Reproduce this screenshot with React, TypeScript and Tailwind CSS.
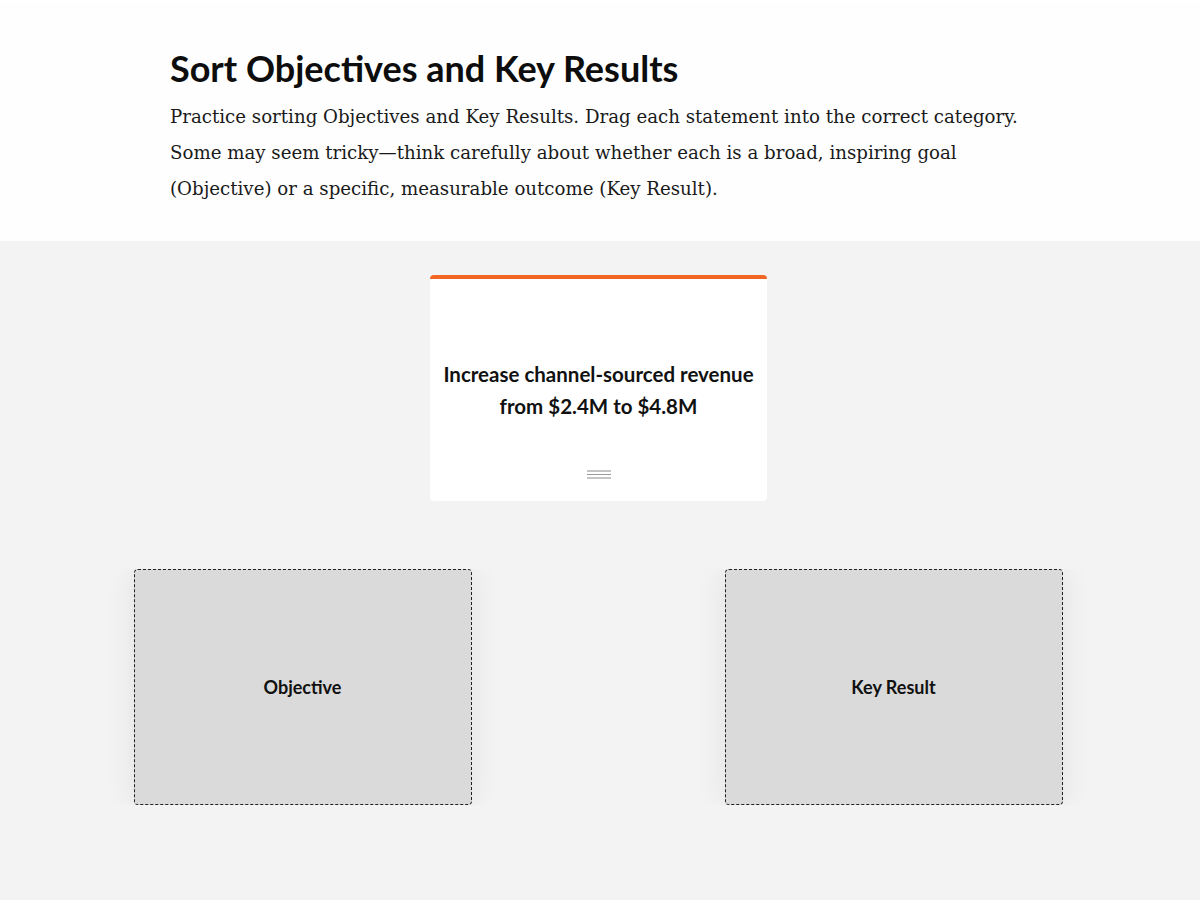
import React from "react";

const lato = { fontFamily: "Lato, 'Open Sans', sans-serif" };

function GripIcon() {
  return (
    <svg width="26" height="9" viewBox="0 0 26 9" aria-hidden>
      <line x1="1" y1="1" x2="25" y2="1" stroke="#8a8a8a" strokeWidth="1" />
      <line x1="1" y1="4.5" x2="25" y2="4.5" stroke="#9a9a9a" strokeWidth="1" />
      <line x1="1" y1="8" x2="25" y2="8" stroke="#8a8a8a" strokeWidth="1" />
    </svg>
  );
}

function DropZone({ label }: { label: string }) {
  return (
    <div className="flex h-[236px] w-[338px] items-center justify-center rounded-[4px] border border-dashed border-[#222] bg-[#dadada] shadow-[0_0_32px_rgba(0,0,0,0.07)]">
      <span style={lato} className="text-[18px] font-bold text-[#111]">
        {label}
      </span>
    </div>
  );
}

export default function App() {
  return (
    <div className="min-h-[900px] bg-[#f3f3f3]">
      {/* — Intro — */}
      <div className="mt-[3px] bg-[#fefefe] pt-[41px] pb-[34px]">
        <div className="mx-auto w-[860px]">
          <h1 style={lato} className="text-[36px] leading-[48px] font-bold text-[#0d0d0d]">
            Sort Objectives and Key Results
          </h1>
          <p
            style={{ fontFamily: "'DejaVu Serif', 'Liberation Serif', serif" }}
            className="mt-[7px] text-[18.2px] leading-[36px] text-[#1a1a1a]"
          >
            Practice sorting Objectives and Key Results. Drag each statement into the correct category.
            Some may seem tricky—think carefully about whether each is a broad, inspiring goal
            (Objective) or a specific, measurable outcome (Key Result).
          </p>
        </div>
      </div>

      {/* — Statement card — */}
      <div className="flex justify-center pt-[34px] pr-[3px]">
        <div className="flex h-[226px] w-[337px] flex-col items-center rounded-[4px] border-t-[4px] border-[#f26522] bg-white">
          <p
            style={lato}
            className="mt-[79px] px-2 text-center text-[20.5px] leading-[32px] font-bold text-[#111]"
          >
            Increase channel-sourced revenue
            <br />
            from $2.4M to $4.8M
          </p>
          <div className="mt-auto mb-[22px]">
            <GripIcon />
          </div>
        </div>
      </div>

      {/* — Drop zones — */}
      <div className="mt-[68px] overflow-hidden">
        <div className="flex justify-center gap-[253px] pr-[4px]">
          <DropZone label="Objective" />
          <DropZone label="Key Result" />
        </div>
      </div>
    </div>
  );
}
